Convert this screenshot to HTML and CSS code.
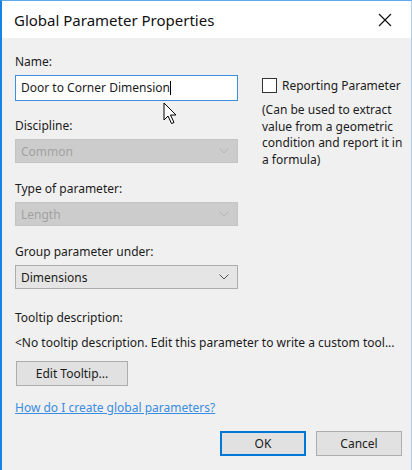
FILE: index.html
```html
<!DOCTYPE html>
<html>
<head>
    <title>Global Parameter Properties</title>
    <link rel="stylesheet" href="styles.css">
</head>
<body>

<div class="dialog">

    <div class="titlebar">
        <span class="title">Global Parameter Properties</span>
        <svg class="close" width="14" height="14" viewBox="0 0 14 14">
            <path d="M1 1 L13 13 M13 1 L1 13" stroke="#111" stroke-width="1.2" fill="none"/>
        </svg>
    </div>

    <div class="content">

        <div class="columns">
            <div class="fields">
                <label class="label">Name:</label>
                <div class="textbox">Door to Corner Dimension<span class="caret"></span></div>

                <label class="label">Discipline:</label>
                <div class="select disabled">
                    <span>Common</span>
                    <svg width="10" height="6" viewBox="0 0 10 6"><polyline points="0.5,0.5 5,5 9.5,0.5" fill="none" stroke="#b5b5b5" stroke-width="1"/></svg>
                </div>

                <label class="label">Type of parameter:</label>
                <div class="select disabled">
                    <span>Length</span>
                    <svg width="10" height="6" viewBox="0 0 10 6"><polyline points="0.5,0.5 5,5 9.5,0.5" fill="none" stroke="#b5b5b5" stroke-width="1"/></svg>
                </div>

                <label class="label">Group parameter under:</label>
                <div class="select">
                    <span>Dimensions</span>
                    <svg width="10" height="6" viewBox="0 0 10 6"><polyline points="0.5,0.5 5,5 9.5,0.5" fill="none" stroke="#555" stroke-width="1"/></svg>
                </div>
            </div>

            <div class="side">
                <div class="check-row">
                    <span class="checkbox"></span>
                    <span>Reporting Parameter</span>
                </div>
                <p class="note">(Can be used to extract<br>value from a geometric<br>condition and report it in<br>a formula)</p>
            </div>
        </div>

        <div class="label tooltip-label">Tooltip description:</div>
        <div class="tooltip-text">&lt;No tooltip description. Edit this parameter to write a custom tool...</div>

        <button class="btn edit-btn">Edit Tooltip...</button>

        <a class="help-link" href="#">How do I create global parameters?</a>

        <div class="footer">
            <button class="btn ok-btn">OK</button>
            <button class="btn">Cancel</button>
        </div>

    </div>

    <svg class="pointer" width="16" height="24" viewBox="0 0 16 24">
        <path d="M1 1 L1 18 L5 14 L8.5 21.5 L11 20.5 L7.5 13 L13 13 Z" fill="#fff" stroke="#000" stroke-width="1"/>
    </svg>

</div>

</body>
</html>
```

FILE: styles.css
```css
body {
    margin: 0;
    font-family: "Noto Sans", "Open Sans", sans-serif;
    font-size: 12px;
    color: #1b1b1b;
    background-color: #f0f0f0;
}

.dialog {
    position: relative;
    width: 412px;
    height: 470px;
    box-sizing: border-box;
    border-left: 2px solid #1883e6;
    border-top: 1px solid #5fa8ea;
    border-right: 1px solid #a9cdf0;
    background-color: #f0f0f0;
    overflow: hidden;
}

.titlebar {
    height: 37px;
    background-color: #fff;
    display: flex;
    align-items: center;
    justify-content: space-between;
    padding: 0 19px 0 12px;
}

.title {
    font-size: 15px;
    color: #111;
}

.content {
    padding: 16px 9px 0 13px;
}

.columns {
    display: grid;
    grid-template-columns: 223px 1fr;
    gap: 24px;
}

.label {
    display: block;
    line-height: 16px;
    margin-bottom: 5px;
}

.textbox {
    height: 24px;
    border: 1px solid #3c8fdd;
    background-color: #fff;
    line-height: 24px;
    padding-left: 5px;
    margin-bottom: 17px;
    white-space: nowrap;
}

.caret {
    display: inline-block;
    width: 1px;
    height: 14px;
    background-color: #000;
    vertical-align: -3px;
}

.select {
    height: 22px;
    border: 1px solid #acacac;
    background-color: #e5e5e5;
    display: flex;
    align-items: center;
    justify-content: space-between;
    padding: 0 8px 0 5px;
    margin-bottom: 18px;
}

.select.disabled {
    background-color: #cccccc;
    border-color: #c4c4c4;
    color: #a2a2a2;
}

.side {
    padding-top: 23px;
}

.check-row {
    display: flex;
    align-items: center;
    gap: 5px;
}

.checkbox {
    width: 13px;
    height: 13px;
    border: 1px solid #333;
    background-color: #fff;
}

.note {
    margin: 8px 0 0;
    line-height: 16.7px;
    white-space: nowrap;
}

.tooltip-label {
    margin-top: 3px;
    margin-bottom: 9px;
}

.tooltip-text {
    line-height: 16px;
    white-space: nowrap;
}

.btn {
    font-family: inherit;
    font-size: 12px;
    color: #1b1b1b;
    background-color: #e1e1e1;
    border: 1px solid #adadad;
    height: 25px;
    padding: 0;
    cursor: pointer;
}

.edit-btn {
    display: block;
    width: 112px;
    margin: 10px 0 0 1px;
}

.help-link {
    display: inline-block;
    margin-top: 14px;
    line-height: 16px;
    color: #3a8de0;
}

.footer {
    display: flex;
    justify-content: flex-end;
    gap: 10px;
    margin-top: 15px;
}

.footer .btn {
    width: 86px;
}

.ok-btn {
    border: 2px solid #0078d7;
}

.pointer {
    position: absolute;
    left: 161px;
    top: 101px;
}
```
